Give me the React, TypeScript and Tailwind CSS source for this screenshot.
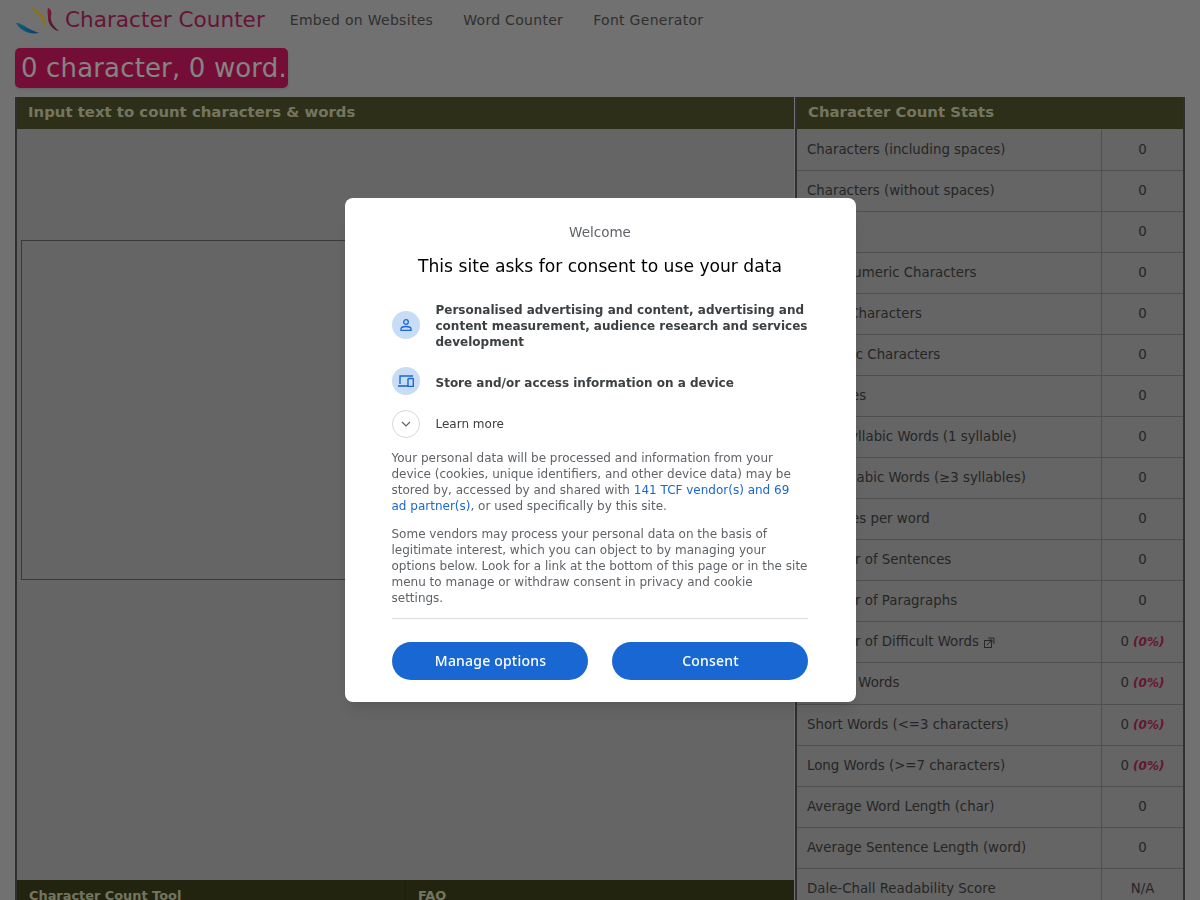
const font = { fontFamily: '"DejaVu Sans", sans-serif' };

const stats: [string, string, boolean?][] = [
  ['Characters (including spaces)', '0'],
  ['Characters (without spaces)', '0'],
  ['Words', '0'],
  ['Alphanumeric Characters', '0'],
  ['Alpha Characters', '0'],
  ['Numeric Characters', '0'],
  ['Syllables', '0'],
  ['Monosyllabic Words (1 syllable)', '0'],
  ['Polysyllabic Words (≥3 syllables)', '0'],
  ['Syllables per word', '0'],
  ['Number of Sentences', '0'],
  ['Number of Paragraphs', '0'],
  ['Number of Difficult Words', '0', true],
  ['Unique Words', '0', true],
  ['Short Words (<=3 characters)', '0', true],
  ['Long Words (>=7 characters)', '0', true],
  ['Average Word Length (char)', '0'],
  ['Average Sentence Length (word)', '0'],
  ['Dale-Chall Readability Score', 'N/A'],
];

function Logo() {
  return (
    <svg width="48" height="36" viewBox="0 0 48 36" className="shrink-0">
      <defs>
        <linearGradient id="swoosh" x1="0" x2="1" y1="0" y2="0">
          <stop offset="0" stopColor="#10a8c8" />
          <stop offset="1" stopColor="#1c5fb0" />
        </linearGradient>
        <linearGradient id="blade" x1="0" x2="0" y1="0" y2="1">
          <stop offset="0" stopColor="#e0206c" />
          <stop offset="1" stopColor="#7a2a44" />
        </linearGradient>
      </defs>
      <path d="M1 21 C6 20 10 26 24 31 C14 33 5 28 1 21 Z" fill="url(#swoosh)" />
      <path d="M15 6 C22 5 31 14 31 25 C29 24 28 18 24 13 C21 10 18 8 15 6 Z" fill="#e8c020" />
      <path d="M33 6 C36 7 37 10 36 14 C35 20 39 25 44 29 C38 28 33 22 33 16 C33 12 32 9 33 6 Z" fill="url(#blade)" />
    </svg>
  );
}

function DifficultLink() {
  return (
    <svg width="11" height="11" viewBox="0 0 11 11" fill="none" stroke="#444444" strokeWidth="1" className="ml-[5px] mt-[2px]">
      <rect x="0.5" y="3.5" width="7" height="7" />
      <path d="M4 1 H10 V7" />
      <path d="M3 8 L8 3 M5.5 3 H8 V5.5" />
    </svg>
  );
}

function StatRow({ label, value, pct, tall }: { label: string; value: string; pct?: boolean; tall?: boolean }) {
  return (
    <div className={`flex border-b border-[#858585] text-[13.33px] text-[#404040] ${tall ? 'h-[42px]' : 'h-[41px]'}`}>
      <div className="flex w-[305px] items-center border-r border-[#858585] pb-[1px] pl-[10px]">
        {label}
        {label === 'Number of Difficult Words' && <DifficultLink />}
      </div>
      <div className="flex flex-1 items-center justify-center gap-[4px] pb-[1px]">
        <span>{value}</span>
        {pct && <span className="text-[12px] font-bold italic text-[#a82650]">(0%)</span>}
      </div>
    </div>
  );
}

function PanelHeader({ children }: { children: string }) {
  return (
    <div className="flex h-[32px] items-center bg-[#4c4f28] pb-[1px] pl-[11px] text-[14.9px] font-bold text-[#c0c4a0]">
      {children}
    </div>
  );
}

function ConsentDialog() {
  return (
    <div className="fixed inset-0 z-10 flex items-center justify-center bg-black/40">
      <div className="h-[504px] w-[511px] rounded-[8px] bg-white pl-[47px] pr-[48px] pt-[24px] shadow-lg">
        <p className="pl-[1px] text-center text-[13.5px] leading-[20px] text-[#5f6368]">Welcome</p>
        <h1 className="mt-[11px] pl-[1px] text-center text-[17.15px] font-normal leading-[26px] text-black">
          This site asks for consent to use your data
        </h1>
        <div className="mt-[23px] flex items-center gap-[16px]">
          <div className="flex h-[28px] w-[28px] shrink-0 -translate-y-[1px] items-center justify-center rounded-full bg-[#c9dcf5]">
            <svg width="14" height="14" viewBox="0 0 14 14" fill="none" stroke="#1967d2" strokeWidth="1.3">
              <circle cx="7" cy="4" r="2.3" />
              <path d="M2 12.3 V11 C2 9.2 4.5 8.5 7 8.5 C9.5 8.5 12 9.2 12 11 V12.3 Z" />
            </svg>
          </div>
          <p className="text-[12px] font-bold leading-[16px] text-[#3c4043]">
            Personalised advertising and content, advertising and content measurement, audience research and services development
          </p>
        </div>
        <div className="mt-[19px] flex items-center gap-[16px]">
          <div className="flex h-[28px] w-[28px] shrink-0 -translate-y-[2px] items-center justify-center rounded-full bg-[#c9dcf5]">
            <svg width="16" height="12" viewBox="0 0 16 12" fill="none" stroke="#1967d2" strokeWidth="1.4">
              <path d="M15 1 H2 V9" />
              <path d="M0 11 H10" strokeWidth="1.6" />
              <rect x="10" y="3.5" width="5.3" height="8" rx="0.6" />
            </svg>
          </div>
          <p className="text-[12px] font-bold leading-[16px] text-[#3c4043]">Store and/or access information on a device</p>
        </div>
        <div className="mt-[13px] flex items-center gap-[16px]">
          <div className="flex h-[28px] w-[28px] shrink-0 items-center justify-center rounded-full border border-[#d5d7da]">
            <svg width="10" height="6" viewBox="0 0 10 6" fill="none" stroke="#5f6368" strokeWidth="1.2">
              <path d="M1 1 L5 5 L9 1" />
            </svg>
          </div>
          <span className="text-[12px] text-[#3c4043]">Learn more</span>
        </div>
        <p className="mt-[12px] pr-[2px] text-[12px] leading-[16px] text-[#5f6368]">
          Your personal data will be processed and information from your device (cookies, unique identifiers, and other device data) may be stored by, accessed by and shared with{' '}
          <span className="text-[#1967d2]">141 TCF vendor(s) and 69 ad partner(s)</span>, or used specifically by this site.
        </p>
        <p className="mt-[12px] text-[12px] leading-[16px] text-[#5f6368]">
          Some vendors may process your personal data on the basis of legitimate interest, which you can object to by managing your options below. Look for a link at the bottom of this page or in the site menu to manage or withdraw consent in privacy and cookie
          <br />
          settings.
        </p>
        <div className="mt-[12px] border-t border-[#dadce0]" />
        <div className="mt-[23px] flex gap-[24px]" style={{ fontFamily: '"Noto Sans", sans-serif' }}>
          <button className="h-[38px] flex-1 rounded-full bg-[#1967d2] pb-[2px] pl-[2px] text-[14px] font-medium tracking-[0.2px] text-white">Manage options</button>
          <button className="h-[38px] flex-1 rounded-full bg-[#1967d2] pb-[2px] pl-[2px] text-[14px] font-medium tracking-[0.2px] text-white">Consent</button>
        </div>
      </div>
    </div>
  );
}

export default function App() {
  return (
    <div className="h-[900px] overflow-hidden bg-[#bcbcbc]" style={font}>
      <header className="flex h-[40px] items-center pl-[15px]">
        <Logo />
        <span className="ml-[2px] text-[21.6px] text-[#a8245a]">Character Counter</span>
        <nav className="ml-[25px] flex gap-[30px] text-[14px] tracking-[0.3px] text-[#505050]">
          <span>Embed on Websites</span>
          <span>Word Counter</span>
          <span>Font Generator</span>
        </nav>
      </header>
      <div className="ml-[15px] mt-[8px] inline-block h-[40px] rounded-[5px] bg-[#c4185a] pl-[6px] pr-[1px] text-[26px] leading-[40px] tracking-[0.15px] text-[#dcdcdc] shadow">
        0 character, 0 word.
      </div>
      <main className="ml-[15px] mt-[9px] flex w-[1170px] gap-[1px]">
        <section className="w-[779px] border-l-2 border-[#505050] bg-[#a8a8a8]">
          <PanelHeader>Input text to count characters &amp; words</PanelHeader>
          <div className="h-[751px] px-[4px] pt-[111px]">
            <div className="h-[340px] border border-[#606060]" />
          </div>
          <div className="flex h-[40px] bg-[#3a3d1c] text-[12.9px] font-bold text-[#c0c4a0]">
            <div className="w-[389px] border-r border-[#33361a] pl-[12px] pt-[6px]">Character Count Tool</div>
            <div className="flex-1 pl-[12px] pt-[6px]">FAQ</div>
          </div>
        </section>
        <section className="flex-1 border-x-2 border-[#505050] bg-[#a8a8a8]">
          <PanelHeader>Character Count Stats</PanelHeader>
          <div className="pt-[1px]">
            {stats.map(([label, value, pct]) => (
              <StatRow key={label} label={label} value={value} pct={pct} tall={label === 'Unique Words'} />
            ))}
          </div>
        </section>
      </main>
      <ConsentDialog />
    </div>
  );
}
